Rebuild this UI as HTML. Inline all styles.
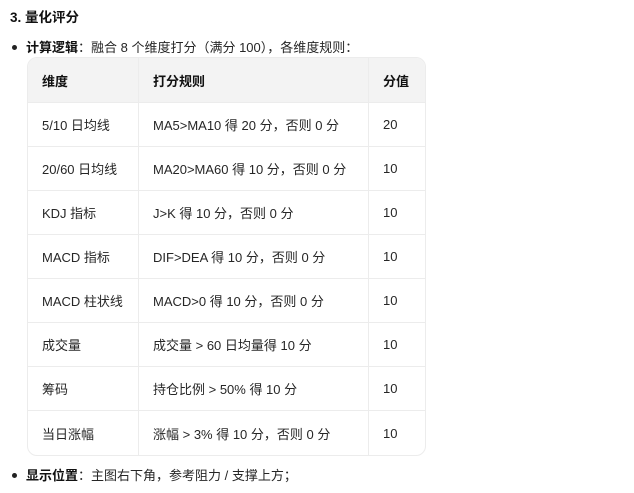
<!DOCTYPE html>
<html><head><meta charset="utf-8"><style>
body{margin:0;background:#fff;font-family:"Liberation Sans","Noto Sans CJK SC",sans-serif;color:#262626;font-size:13px;width:634px;height:493px;overflow:hidden;position:relative}
.h{position:absolute;left:10px;top:6px;font-weight:bold;font-size:13.5px;color:#111}
.b{position:absolute;left:10px;font-size:13px}
.b i{display:inline-block;width:5px;height:5px;border-radius:50%;background:#222;margin:0 9px 2px 2px;vertical-align:middle}
.b strong{color:#111}
table{position:absolute;left:27px;top:57px;width:399px;border-collapse:separate;border-spacing:0;border:1px solid #ececec;border-radius:10px;overflow:hidden}
td,th{height:43px;padding:0 0 0 14px;text-align:left;border-right:1px solid #ececec;border-bottom:1px solid #ececec;font-size:13px;white-space:nowrap}
th{background:#f3f3f3;font-weight:bold;color:#111;height:44px}
tr:last-child td{height:44px}
tr td:last-child,tr th:last-child{border-right:none}
tr:last-child td{border-bottom:none}
</style></head><body>
<div class="h">3. 量化评分</div>
<div class="b" style="top:37px"><i></i><strong>计算逻辑</strong>：融合 8 个维度打分（满分 100），各维度规则：</div>
<table>
<tr><th style="width:96px">维度</th><th style="width:215px">打分规则</th><th>分值</th></tr>
<tr><td>5/10 日均线</td><td>MA5&gt;MA10 得 20 分，否则 0 分</td><td>20</td></tr>
<tr><td>20/60 日均线</td><td>MA20&gt;MA60 得 10 分，否则 0 分</td><td>10</td></tr>
<tr><td>KDJ 指标</td><td>J&gt;K 得 10 分，否则 0 分</td><td>10</td></tr>
<tr><td>MACD 指标</td><td>DIF&gt;DEA 得 10 分，否则 0 分</td><td>10</td></tr>
<tr><td>MACD 柱状线</td><td>MACD&gt;0 得 10 分，否则 0 分</td><td>10</td></tr>
<tr><td>成交量</td><td>成交量 &gt; 60 日均量得 10 分</td><td>10</td></tr>
<tr><td>筹码</td><td>持仓比例 &gt; 50% 得 10 分</td><td>10</td></tr>
<tr><td>当日涨幅</td><td>涨幅 &gt; 3% 得 10 分，否则 0 分</td><td>10</td></tr>
</table>
<div class="b" style="top:465px"><i></i><strong>显示位置</strong>：主图右下角，参考阻力 / 支撑上方；</div>
</body></html>
